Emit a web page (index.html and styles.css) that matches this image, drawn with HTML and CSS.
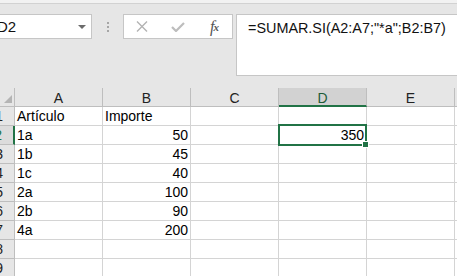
FILE: index.html
```html
<!DOCTYPE html>
<html lang="es">

<head>
    <meta charset="UTF-8">
    <title>SUMAR.SI</title>
    <link rel="stylesheet" href="styles.css">
</head>

<body>
    <div class="ribbon-edge"></div>

    <div class="formula-bar">
        <div class="name-box">
            <span>D2</span>
            <svg class="drop" width="8" height="4" viewBox="0 0 8 4"><polygon points="0,0 8,0 4,4" fill="#6b6b6b"/></svg>
        </div>
        <div class="grip"><i></i><i></i><i></i></div>
        <div class="fx-buttons">
            <span class="slot">
                <svg width="12" height="11" viewBox="0 0 12 11"><path d="M1 0.5 L11 10.5 M11 0.5 L1 10.5" stroke="#b3b3b3" stroke-width="1.4" fill="none"/></svg>
            </span>
            <span class="slot">
                <svg width="14" height="10" viewBox="0 0 14 10"><path d="M1 5 L5 9 L13 1" stroke="#bdbdbd" stroke-width="2.2" fill="none"/></svg>
            </span>
            <span class="slot fx">f<small>x</small></span>
        </div>
        <div class="formula-input">=SUMAR.SI(A2:A7;"*a";B2:B7)</div>
    </div>

    <div class="sheet">
        <div class="hd corner"><span class="tri"></span></div>
        <div class="hd col">A</div>
        <div class="hd col">B</div>
        <div class="hd col">C</div>
        <div class="hd col active">D</div>
        <div class="hd col">E</div>
        <div class="hd col"></div>

        <div class="hd rown">1</div>
        <div class="c">Artículo</div>
        <div class="c">Importe</div>
        <div class="c"></div><div class="c"></div><div class="c"></div><div class="c"></div>

        <div class="hd rown active">2</div>
        <div class="c">1a</div>
        <div class="c num">50</div>
        <div class="c"></div>
        <div class="c num selected">350<span class="sel-box"><span class="handle"></span></span></div>
        <div class="c"></div><div class="c"></div>

        <div class="hd rown">3</div>
        <div class="c">1b</div>
        <div class="c num">45</div>
        <div class="c"></div><div class="c"></div><div class="c"></div><div class="c"></div>

        <div class="hd rown">4</div>
        <div class="c">1c</div>
        <div class="c num">40</div>
        <div class="c"></div><div class="c"></div><div class="c"></div><div class="c"></div>

        <div class="hd rown">5</div>
        <div class="c">2a</div>
        <div class="c num">100</div>
        <div class="c"></div><div class="c"></div><div class="c"></div><div class="c"></div>

        <div class="hd rown">6</div>
        <div class="c">2b</div>
        <div class="c num">90</div>
        <div class="c"></div><div class="c"></div><div class="c"></div><div class="c"></div>

        <div class="hd rown">7</div>
        <div class="c">4a</div>
        <div class="c num">200</div>
        <div class="c"></div><div class="c"></div><div class="c"></div><div class="c"></div>

        <div class="hd rown">8</div>
        <div class="c"></div><div class="c"></div><div class="c"></div><div class="c"></div><div class="c"></div><div class="c"></div>

        <div class="hd rown">9</div>
        <div class="c"></div><div class="c"></div><div class="c"></div><div class="c"></div><div class="c"></div><div class="c"></div>
    </div>
</body>

</html>
```

FILE: styles.css
```css
/* Hoja de cálculo: barra de fórmulas y cuadrícula */
body {
    margin: 0;
    width: 457px;
    height: 276px;
    overflow: hidden;
    background: #e6e6e6;
    font-family: 'Liberation Sans', Arial, sans-serif;
    color: #000;
}

.ribbon-edge {
    height: 3px;
    background: #f2f2f2;
    border-bottom: 1px solid #d2d2d2;
}

/* Barra de fórmulas */
.formula-bar {
    height: 84px;
    box-sizing: border-box;
    padding-top: 10px;
    display: flex;
    align-items: flex-start;
}

.name-box {
    margin-left: -30px;
    width: 122px;
    height: 25px;
    box-sizing: border-box;
    background: #fff;
    border: 1px solid #c6c6c6;
    display: flex;
    align-items: center;
    padding-left: 26px;
    font-size: 15px;
    line-height: 23px;
    color: #111;
}

.name-box .drop {
    margin-left: auto;
    margin-right: 5px;
}

.grip {
    width: 31px;
    height: 25px;
    display: flex;
    flex-direction: column;
    align-items: center;
    justify-content: center;
    gap: 2px;
}

.grip i {
    width: 2px;
    height: 2px;
    background: #a6a6a6;
}

.fx-buttons {
    width: 110px;
    height: 25px;
    box-sizing: border-box;
    background: #fff;
    border: 1px solid #c6c6c6;
    display: flex;
}

.slot {
    width: 36px;
    display: flex;
    align-items: center;
    justify-content: center;
}

.fx {
    font-family: 'Liberation Serif', 'Times New Roman', serif;
    font-style: italic;
    font-size: 16px;
    color: #555;
    letter-spacing: -1px;
}

.fx small {
    font-size: 11px;
    font-weight: bold;
}

.formula-input {
    margin-left: 3px;
    flex: 1;
    margin-right: -10px;
    height: 62px;
    box-sizing: border-box;
    background: #fff;
    border: 1px solid #c6c6c6;
    padding: 4px 0 0 11px;
    font-size: 14.4px;
    line-height: 18px;
    color: #111;
    white-space: nowrap;
}

/* Cuadrícula */
.sheet {
    display: grid;
    grid-template-columns: 15px repeat(5, 88px) 1fr;
    grid-auto-rows: 19px;
    background: #fff;
    font-size: 14px;
}

.sheet > div {
    box-sizing: border-box;
    border-right: 1px solid #d4d4d4;
    border-bottom: 1px solid #d4d4d4;
    white-space: nowrap;
}

.c {
    line-height: 18px;
    padding: 0 2px;
}

.c.num {
    text-align: right;
}

.sheet > .hd {
    background: #e6e6e6;
    border-color: #bebebe;
    color: #222;
}

.col {
    text-align: center;
    line-height: 20px;
}

.sheet > .col.active {
    background: #d2d2d2;
    border-bottom: 2px solid #217346;
    color: #1d5c38;
}

.rown {
    text-align: right;
    padding-right: 11px;
    line-height: 18px;
    direction: rtl;
}

.sheet > .rown.active {
    background: #dcdcdc;
    border-right: 2px solid #217346;
    color: #217346;
}

.corner {
    position: relative;
}

.tri {
    position: absolute;
    right: 2px;
    bottom: 3px;
    width: 0;
    height: 0;
    border-left: 8px solid transparent;
    border-bottom: 8px solid #b4b4b4;
}

.selected {
    position: relative;
}

.sel-box {
    position: absolute;
    top: -2px;
    left: -1px;
    right: -1px;
    bottom: -2px;
    border: 2px solid #217346;
}

.handle {
    position: absolute;
    right: -4px;
    bottom: -4px;
    width: 5px;
    height: 5px;
    background: #217346;
    border: 1px solid #fff;
}
```
